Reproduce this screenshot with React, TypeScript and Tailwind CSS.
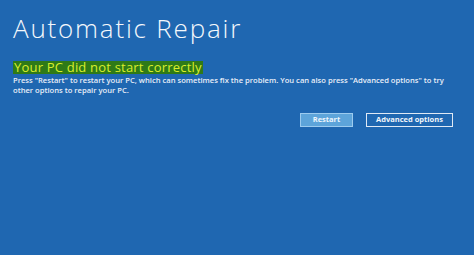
export default function App() {
  return (
    <div className="w-[474px] h-[255px] bg-[#1f67b1] overflow-hidden font-['Open_Sans',sans-serif] text-white">
      <div className="pl-[13px] pt-[13px]">
        <h1 className="text-[26px] font-light leading-[30px] tracking-[1.8px] text-[#f4f8fc]">Automatic Repair</h1>
        <div className="mt-[18px] flex">
          <span className="bg-[#2f7a17] text-[#d9ee2c] text-[13px] leading-[13px] px-[1px] tracking-[0.2px]">
            Your PC did not start correctly
          </span>
        </div>
        <p className="mt-[1px] text-[7.6px] leading-[10px] font-semibold text-[#e8eef8] w-[440px]">
          Press "Restart" to restart your PC, which can sometimes fix the problem. You can also press "Advanced options" to try other options to repair your PC.
        </p>
      </div>
      <div className="mt-[18px] flex justify-end gap-[13px] pr-[21px]">
        <div className="w-[53px] h-[14px] bg-[#5da4da] border border-[#9ccbef] flex items-center justify-center text-[7.5px] font-bold text-[#eef6fd]">
          Restart
        </div>
        <div className="w-[87px] h-[14px] border border-[#dfe9f5] flex items-center justify-center text-[7.5px] font-bold text-[#f2f6fb]">
          Advanced options
        </div>
      </div>
    </div>
  );
}
